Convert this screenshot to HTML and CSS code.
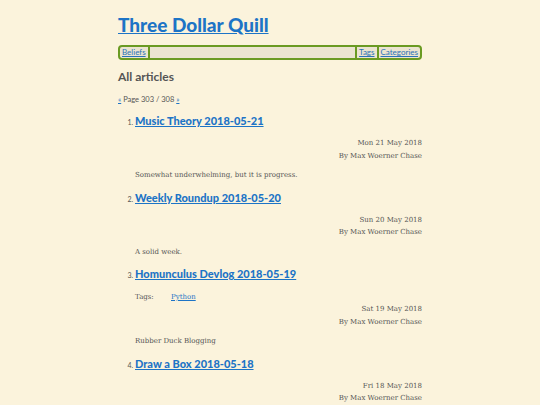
FILE: index.html
```html
<!DOCTYPE html>
<html>
<head>
<meta charset="utf-8">
<link rel="stylesheet" href="styles.css">
</head>
<body>
<div class="page">
  <h1 class="site-title"><a href="#">Three Dollar Quill</a></h1>
  <nav class="nav">
    <a class="nav-link" href="#">Beliefs</a>
    <span class="sep"></span>
    <span class="spacer"></span>
    <span class="sep"></span>
    <a class="nav-link" href="#">Tags</a>
    <span class="sep"></span>
    <a class="nav-link" href="#">Categories</a>
  </nav>
  <h2 class="section-title">All articles</h2>
  <p class="pager"><a href="#">«</a> Page 303 / 308 <a href="#">»</a></p>
  <ol class="articles">
    <li class="article">
      <h3 class="article-title"><a href="#">Music Theory 2018-05-21</a></h3>
      <div class="meta"><div>Mon 21 May 2018</div><div>By Max Woerner Chase</div></div>
      <p class="summary">Somewhat underwhelming, but it is progress.</p>
    </li>
    <li class="article">
      <h3 class="article-title"><a href="#">Weekly Roundup 2018-05-20</a></h3>
      <div class="meta"><div>Sun 20 May 2018</div><div>By Max Woerner Chase</div></div>
      <p class="summary">A solid week.</p>
    </li>
    <li class="article">
      <h3 class="article-title"><a href="#">Homunculus Devlog 2018-05-19</a></h3>
      <div class="tags"><span class="tags-label">Tags:</span><a href="#">Python</a></div>
      <div class="meta"><div>Sat 19 May 2018</div><div>By Max Woerner Chase</div></div>
      <p class="summary">Rubber Duck Blogging</p>
    </li>
    <li class="article">
      <h3 class="article-title"><a href="#">Draw a Box 2018-05-18</a></h3>
      <div class="meta"><div>Fri 18 May 2018</div><div>By Max Woerner Chase</div></div>
    </li>
  </ol>
</div>
</body>
</html>
```
FILE: styles.css
```css
html, body {
  margin: 0;
  padding: 0;
  background: #fbf3dc;
}
body {
  font-family: "DejaVu Serif", serif;
  color: #555;
  font-size: 7px;
}
a { color: #1d74c6; }
.page {
  width: 304px;
  margin: 0 auto;
  padding-top: 14px;
}
.site-title {
  font-family: Lato, sans-serif;
  font-weight: 900;
  font-size: 19px;
  line-height: 22px;
  margin: 0 0 9px 0;
}
.nav {
  display: flex;
  align-items: stretch;
  height: 11px;
  border: 2px solid #6a9a22;
  border-radius: 4px;
  background: #ebe4d0;
  padding: 0;
  font-family: Lato, sans-serif;
  font-size: 8px;
  line-height: 11px;
}
.nav-link { padding: 0 2px; color: #2a72b8; }
.sep { width: 2px; background: #6a9a22; }
.spacer { flex: 1; }
.section-title {
  font-family: Lato, sans-serif;
  font-weight: 700;
  font-size: 12px;
  color: #555;
  margin: 9px 0 0 0;
  line-height: 16px;
}
.pager {
  font-family: Lato, sans-serif;
  font-size: 7.5px;
  margin: 10px 0 0 0;
  line-height: 10px;
}
.articles {
  margin: 8px 0 0 0;
  padding-left: 17px;
}
.article::marker { font-size: 7px; font-family: Lato, sans-serif; }
.article-title {
  font-family: Lato, sans-serif;
  font-weight: 900;
  font-size: 11px;
  line-height: 16px;
  margin: 0;
}
.meta {
  text-align: right;
  line-height: 12.5px;
  margin-top: 8px;
}
.tags {
  margin-top: 10px;
  display: flex;
  line-height: 10px;
}
.tags-label { width: 36px; }
.tags + .meta { margin-top: 1px; }
.summary {
  margin: 7px 0 0 0;
  line-height: 12px;
}
.article { padding-bottom: 8.5px; }
```
